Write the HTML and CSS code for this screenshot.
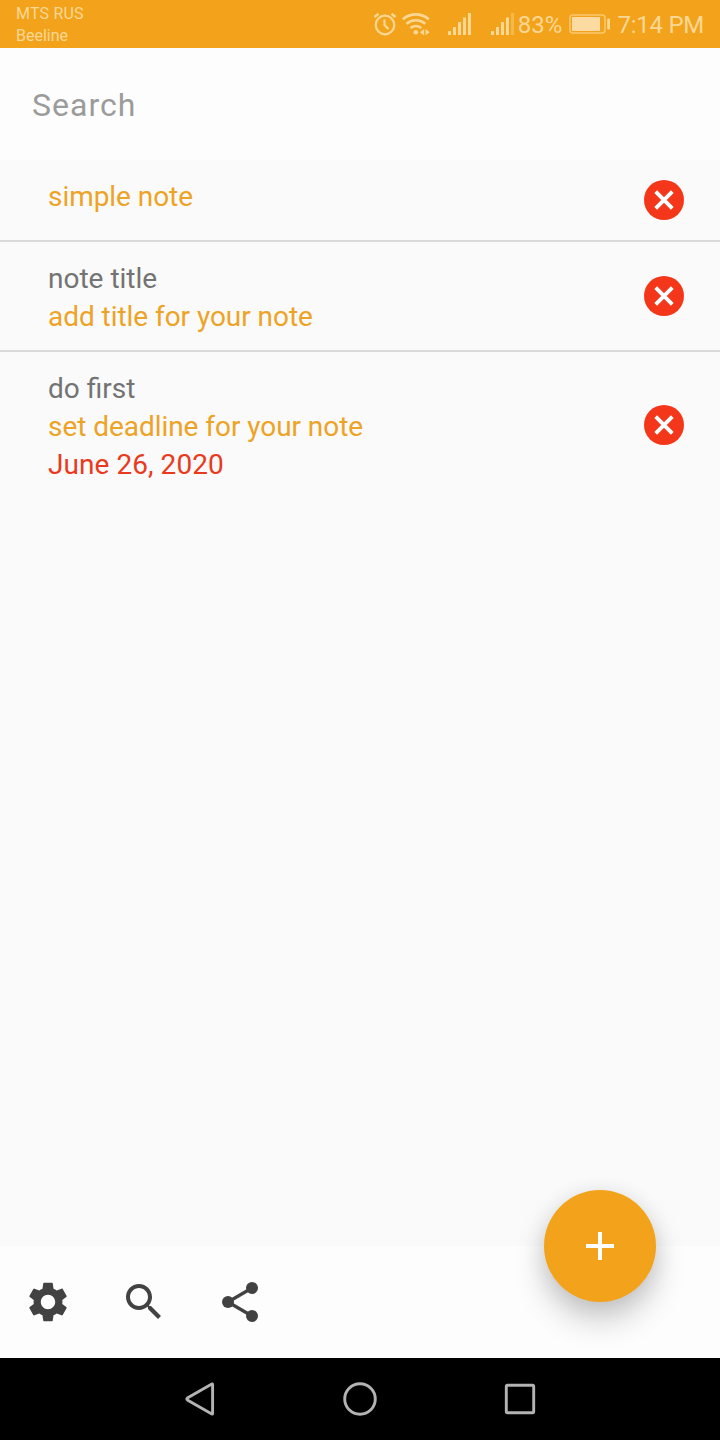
FILE: index.html
```html
<!DOCTYPE html>
<html lang="en">
<head>
<meta charset="utf-8">
<title>Notes</title>
<link rel="stylesheet" href="styles.css">
</head>
<body>
<div class="app">
  <header class="status">
    <div class="carriers"><span class="primary">MTS RUS</span><span>Beeline</span></div>
    <div class="indicators">
      <svg class="signals" width="146" height="48" viewBox="370 0 146 48" fill="none" stroke="#fbd794">
        <circle cx="385" cy="25" r="9.3" stroke-width="2.2"/>
        <path d="M384.5 19.5v5.500l4 4" stroke-width="2.2"/>
        <path d="M374.5 17l4-3.3M391.500 13.700l4 3.300" stroke-width="2.4"/>
        <path d="M402.800 19.200c8-6.400 18-6.400 26 0M406.500 23.800c5.800-4.600 13-4.600 18.800 0M410.400 28c3.600-2.600 7.400-2.600 11 0" stroke-width="2.600"/>
        <circle cx="415.800" cy="32.200" r="2.300" fill="#fbd794" stroke="none"/>
        <path d="M424.200 29v6.500l-4.400-3.200zM425.600 29l4 3.300-4 2.900z" fill="#fbd794" stroke="none"/>
        <path d="M449.500 35v-4M454.500 35v-8M459.500 35V22M464.500 35V17.500M469.500 35V13" stroke-width="3" />
        <path d="M492.500 35v-4M497.500 35v-8M502.500 35V22M507.500 35V17.500" stroke-width="3"/>
        <path d="M512.500 35V13" stroke-width="3" opacity=".4"/>
      </svg>
      <span class="percent">83%</span>
      <svg class="battery" width="42" height="20" viewBox="0 0 42 20">
        <rect x="1" y="1" width="35" height="18" rx="3" fill="none" stroke="#fbd794" stroke-width="1.600" opacity=".7"/>
        <rect x="3" y="3" width="28" height="14" fill="#fbdba2"/>
        <rect x="38.200" y="4.500" width="2.800" height="11" rx="1" fill="#fbd794"/>
      </svg>
      <span class="clock">7:14 PM</span>
    </div>
  </header>

  <div class="search">Search</div>

  <main class="notes">
    <article class="note">
      <div class="lines"><p class="body">simple note</p></div>
      <svg class="remove" viewBox="-20 -20 40 40"><circle r="20" fill="#f4361a"/><path d="M-8.300-8.300L8.300 8.300M8.300-8.300L-8.300 8.300" stroke="#fff" stroke-width="3.900"/></svg>
    </article>
    <article class="note">
      <div class="lines"><p class="title">note title</p><p class="body">add title for your note</p></div>
      <svg class="remove" viewBox="-20 -20 40 40"><circle r="20" fill="#f4361a"/><path d="M-8.300-8.300L8.300 8.300M8.300-8.300L-8.300 8.300" stroke="#fff" stroke-width="3.900"/></svg>
    </article>
    <article class="note">
      <div class="lines"><p class="title">do first</p><p class="body">set deadline for your note</p><p class="due">June 26, 2020</p></div>
      <svg class="remove" viewBox="-20 -20 40 40"><circle r="20" fill="#f4361a"/><path d="M-8.300-8.300L8.300 8.300M8.300-8.300L-8.300 8.300" stroke="#fff" stroke-width="3.900"/></svg>
    </article>
  </main>

  <footer class="toolbar">
    <svg class="tool" viewBox="0 0 24 24"><path d="M19.140 12.940c.04-.3.060-.610.060-.940 0-.320-.020-.640-.070-.940l2.030-1.580c.180-.140.230-.410.120-.610l-1.920-3.320c-.120-.220-.370-.290-.590-.220l-2.390.960c-.5-.380-1.030-.7-1.620-.940l-.360-2.540c-.040-.240-.240-.410-.480-.410h-3.840c-.240 0-.430.170-.470.410l-.360 2.540c-.590.240-1.130.570-1.620.940l-2.390-.960c-.220-.080-.470 0-.590.220L2.740 8.870c-.120.210-.080.470.120.610l2.030 1.580c-.050.300-.090.630-.090.940s.020.640.070.940l-2.030 1.580c-.180.140-.230.410-.120.610l1.920 3.320c.120.220.370.290.590.220l2.390-.960c.500.380 1.030.7 1.620.940l.360 2.540c.050.240.240.410.480.410h3.840c.240 0 .440-.170.470-.410l.360-2.540c.590-.240 1.130-.560 1.620-.940l2.390.960c.220.080.470 0 .590-.220l1.920-3.320c.120-.220.070-.470-.120-.610l-2.010-1.580zM12 15.600c-1.980 0-3.600-1.620-3.600-3.600s1.620-3.600 3.600-3.600 3.600 1.620 3.600 3.600-1.620 3.600-3.600 3.600z"/></svg>
    <svg class="tool" viewBox="0 0 24 24"><path d="M15.500 14h-.79l-.28-.27C15.410 12.590 16 11.110 16 9.500 16 5.910 13.090 3 9.500 3S3 5.910 3 9.500 5.910 16 9.500 16c1.610 0 3.090-.59 4.230-1.570l.27.28v.79l5 4.990L20.490 19l-4.990-5zm-6 0C7.010 14 5 11.990 5 9.500S7.010 5 9.500 5 14 7.010 14 9.500 11.990 14 9.500 14z"/></svg>
    <svg class="tool" viewBox="0 0 24 24"><path d="M6 12L18 5M6 12l12 7" stroke="#424242" stroke-width="1.600"/><circle cx="18" cy="5" r="3"/><circle cx="6" cy="12" r="3"/><circle cx="18" cy="19" r="3"/></svg>
    <div class="add"><svg width="28" height="28" viewBox="0 0 28 28"><path d="M14 0v28M0 14h28" stroke="#fff" stroke-width="4"/></svg></div>
  </footer>

  <nav class="system">
    <svg viewBox="0 0 40 40"><path d="M32.600 5.200v29.600q-.2.500-.8.200L7.400 21q-1.200-1 0-2L31.800 5q.6-.3.800.2z"/></svg>
    <svg viewBox="0 0 40 40"><circle cx="20" cy="20" r="15.300"/></svg>
    <svg viewBox="0 0 40 40"><rect x="6.300" y="6.300" width="27.400" height="27.400" rx="1.200"/></svg>
  </nav>
</div>
</body>
</html>
```
FILE: styles.css
```css
body { margin: 0; font-family: Roboto, sans-serif; }
p { margin: 0; }
svg { display: block; flex: none; }
.app { width: 720px; height: 1440px; display: flex; flex-direction: column; background: #fafafa; overflow: hidden; }

.status { height: 48px; flex: none; display: flex; justify-content: space-between; box-sizing: border-box; padding: 0 16px; background: #f2a31b; color: #fbd794; }
.carriers { display: flex; flex-direction: column; padding-top: 3px; font-size: 16px; line-height: 22px; }
.primary { letter-spacing: .2px; }
.indicators { display: flex; align-items: center; font-size: 24px; white-space: nowrap; line-height: 48px; }
.percent { margin-left: 2px; }
.battery { margin: 0 6px 0 7px; }
.percent, .clock { padding-top: 2px; }
.clock { letter-spacing: -.25px; }

.search { height: 112px; flex: none; box-sizing: border-box; padding: 2px 32px 0; line-height: 110px; font-size: 32px; letter-spacing: 1px; color: #9b9b9b; background: #fdfdfd; }

.notes { flex: 1; }
.note { display: flex; align-items: center; justify-content: space-between; box-sizing: border-box; min-height: 80px; padding: 18px 36px 14px 48px; }
.note + .note { border-top: 2px solid #dadada; }
.lines { align-self: flex-start; font-size: 28px; line-height: 38px; }
.title { color: #737373; }
.body { color: #eda326; letter-spacing: -.05px; }
.due { color: #e93a20; letter-spacing: .06px; }
.remove { width: 40px; height: 40px; margin-top: -4px; }

.toolbar { position: relative; height: 112px; flex: none; display: flex; align-items: center; gap: 48px; box-sizing: border-box; padding-left: 24px; background: #fdfdfd; }
.tool { width: 48px; height: 48px; fill: #424242; }
.add { position: absolute; right: 64px; top: -56px; width: 112px; height: 112px; border-radius: 50%; display: flex; align-items: center; justify-content: center; background: #f2a31b; box-shadow: 0 18px 32px rgba(0, 0, 0, .2), 0 3px 22px rgba(0, 0, 0, .09); }

.system { position: relative; height: 82px; flex: none; display: flex; align-items: center; justify-content: center; gap: 120px; background: #000; }
.system svg { width: 40px; height: 40px; fill: none; stroke: #b3b3b3; stroke-width: 2.9; }
```
